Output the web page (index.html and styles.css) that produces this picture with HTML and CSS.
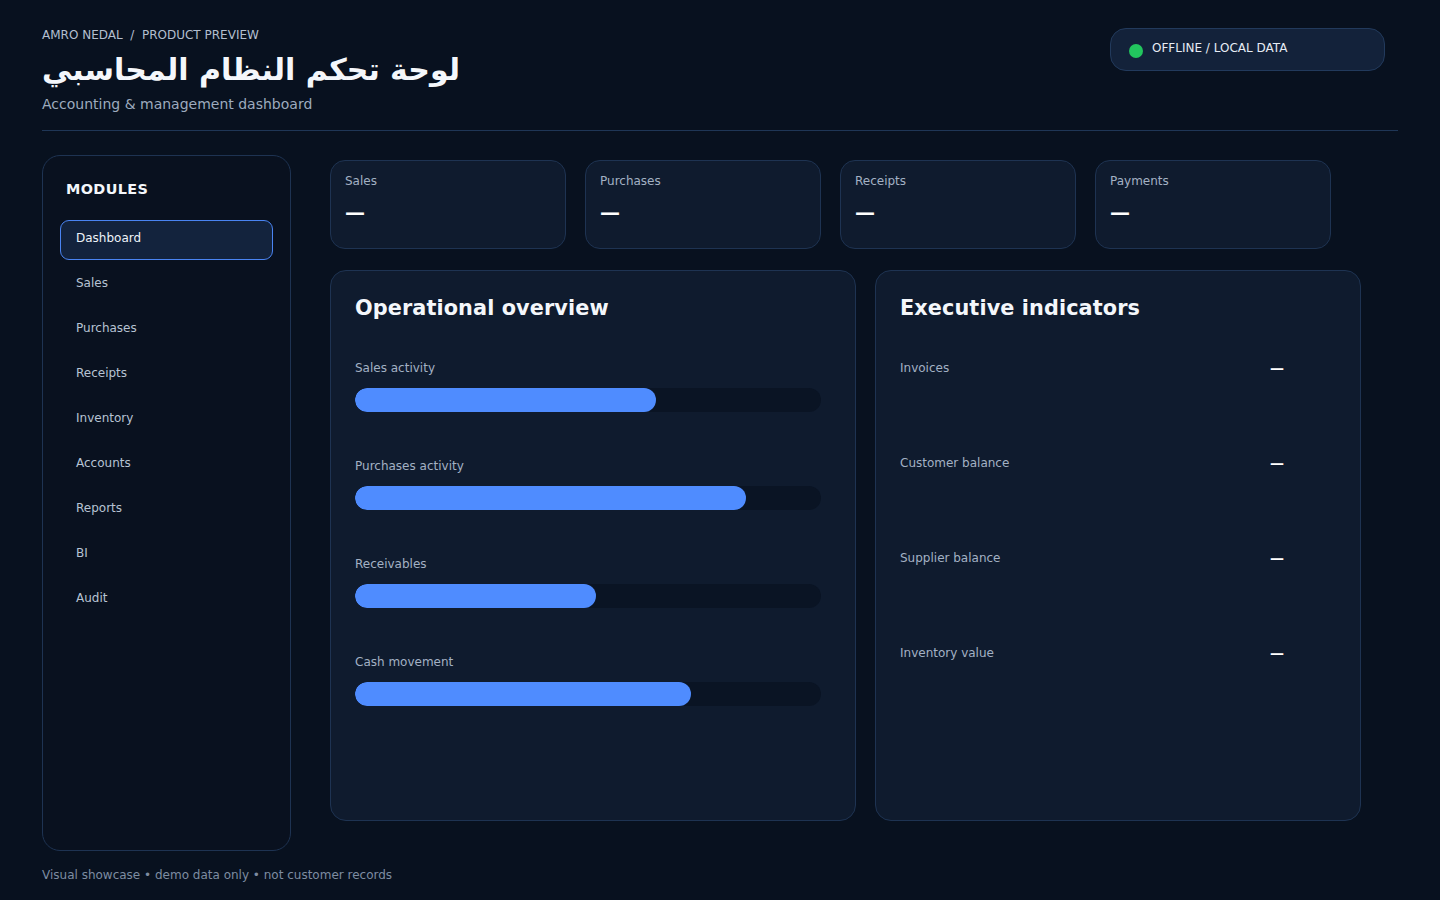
FILE: index.html
```html
<!DOCTYPE html>
<html lang="en">
<head>
<meta charset="utf-8">
<title>Accounting dashboard</title>
<link rel="stylesheet" href="styles.css">
</head>
<body>
<div class="page">
  <header class="header">
    <div class="head-text">
      <div class="crumb">AMRO NEDAL &nbsp;/&nbsp; PRODUCT PREVIEW</div>
      <h1 class="title" dir="rtl">لوحة تحكم النظام المحاسبي</h1>
      <div class="subtitle">Accounting &amp; management dashboard</div>
    </div>
    <div class="badge"><span class="dot"></span><span class="badge-text">OFFLINE / LOCAL DATA</span></div>
  </header>

  <div class="body">
    <aside class="sidebar">
      <div class="side-title">MODULES</div>
      <nav class="nav">
        <div class="nav-item active">Dashboard</div>
        <div class="nav-item">Sales</div>
        <div class="nav-item">Purchases</div>
        <div class="nav-item">Receipts</div>
        <div class="nav-item">Inventory</div>
        <div class="nav-item">Accounts</div>
        <div class="nav-item">Reports</div>
        <div class="nav-item">BI</div>
        <div class="nav-item">Audit</div>
      </nav>
    </aside>

    <main class="main">
      <div class="stats">
        <div class="stat"><div class="stat-label">Sales</div><div class="stat-value">—</div></div>
        <div class="stat"><div class="stat-label">Purchases</div><div class="stat-value">—</div></div>
        <div class="stat"><div class="stat-label">Receipts</div><div class="stat-value">—</div></div>
        <div class="stat"><div class="stat-label">Payments</div><div class="stat-value">—</div></div>
      </div>

      <div class="panels">
        <section class="panel panel-ops">
          <h2 class="panel-title">Operational overview</h2>
          <div class="bars">
            <div class="bar-group">
              <div class="bar-label">Sales activity</div>
              <div class="track"><div class="fill" style="width:64.6%"></div></div>
            </div>
            <div class="bar-group">
              <div class="bar-label">Purchases activity</div>
              <div class="track"><div class="fill" style="width:84%"></div></div>
            </div>
            <div class="bar-group">
              <div class="bar-label">Receivables</div>
              <div class="track"><div class="fill" style="width:51.8%"></div></div>
            </div>
            <div class="bar-group">
              <div class="bar-label">Cash movement</div>
              <div class="track"><div class="fill" style="width:72.2%"></div></div>
            </div>
          </div>
        </section>

        <section class="panel panel-exec">
          <h2 class="panel-title">Executive indicators</h2>
          <div class="kpis">
            <div class="kpi"><span class="kpi-label">Invoices</span><span class="kpi-value">—</span></div>
            <div class="kpi"><span class="kpi-label">Customer balance</span><span class="kpi-value">—</span></div>
            <div class="kpi"><span class="kpi-label">Supplier balance</span><span class="kpi-value">—</span></div>
            <div class="kpi"><span class="kpi-label">Inventory value</span><span class="kpi-value">—</span></div>
          </div>
        </section>
      </div>
    </main>
  </div>

  <footer class="footer">Visual showcase • demo data only • not customer records</footer>
</div>
</body>
</html>
```

FILE: styles.css
```css
* { box-sizing: border-box; }

html, body {
  margin: 0;
  padding: 0;
  background: #08111f;
  color: #f1f5f9;
  font-family: "DejaVu Sans", "Noto Sans", sans-serif;
}

.page {
  width: 1440px;
  height: 900px;
  padding: 27px 42px 0 42px;
  overflow: hidden;
}

/* Header */
.header {
  display: flex;
  justify-content: space-between;
  align-items: flex-start;
  padding-bottom: 17px;
  border-bottom: 1px solid #1f3656;
}

.crumb {
  font-size: 12px;
  line-height: 16px;
  color: #b3bfcf;
}

.title {
  margin: 9px 0 0 0;
  font-size: 30px;
  line-height: 36px;
  font-weight: 700;
  color: #f4f7fb;
  text-align: left;
}

.subtitle {
  margin-top: 7px;
  font-size: 14px;
  line-height: 18px;
  color: #9dabbe;
}

.badge {
  margin-top: 1px;
  margin-right: 13px;
  width: 275px;
  height: 43px;
  display: flex;
  align-items: center;
  gap: 9px;
  padding: 0 18px;
  background: #13223a;
  border: 1px solid #223a5c;
  border-radius: 16px;
}

.dot {
  width: 14px;
  height: 14px;
  border-radius: 50%;
  background: #22c55e;
  margin-top: 3px;
  flex: none;
}

.badge-text {
  font-size: 12px;
  line-height: 16px;
  color: #e6ecf4;
  margin-top: -4px;
}

/* Body */
.body {
  display: flex;
  gap: 39px;
  margin-top: 24px;
}

.sidebar {
  width: 249px;
  height: 696px;
  border: 1px solid #1e3352;
  border-radius: 18px;
  background: #09111f;
  padding: 24px 17px 17px 17px;
}

.side-title {
  margin-left: 6px;
  font-size: 14.4px;
  line-height: 18px;
  font-weight: 700;
  letter-spacing: 0.4px;
  color: #f4f7fb;
}

.nav {
  margin-top: 22px;
  display: flex;
  flex-direction: column;
  gap: 5px;
}

.nav-item {
  height: 40px;
  padding: 9px 0 0 15px;
  border: 1px solid transparent;
  border-radius: 9px;
  font-size: 12px;
  line-height: 16px;
  color: #b7c3d3;
}

.nav-item.active {
  background: #13233d;
  border-color: #4a84f2;
  color: #eef3f9;
}

/* Main */
.main {
  width: 1031px;
  margin-top: 5px;
  display: flex;
  flex-direction: column;
  gap: 21px;
}

.stats {
  display: flex;
  gap: 19px;
}

.stat {
  width: 236px;
  height: 89px;
  background: #0f1b2e;
  border: 1px solid #1e3352;
  border-radius: 15px;
  padding: 12px 14px;
}

.stat-label {
  font-size: 12px;
  line-height: 16px;
  color: #a3b1c4;
}

.stat-value {
  margin-top: 10px;
  font-size: 20px;
  line-height: 26px;
  font-weight: 700;
  color: #ffffff;
}

.panels {
  display: flex;
  gap: 19px;
}

.panel {
  height: 551px;
  background: #0f1b2e;
  border: 1px solid #1e3352;
  border-radius: 16px;
  padding: 24px 24px;
}

.panel-ops { width: 526px; }
.panel-exec { width: 486px; }

.panel-title {
  margin: 0;
  font-size: 20.8px;
  line-height: 26px;
  font-weight: 700;
  color: #f4f7fb;
  letter-spacing: 0.1px;
}

.bars {
  margin-top: 39px;
  display: flex;
  flex-direction: column;
  gap: 46px;
}

.bar-label {
  font-size: 12px;
  line-height: 16px;
  color: #a3b1c4;
}

.track {
  margin-top: 12px;
  width: 466px;
  height: 24px;
  border-radius: 12px;
  background: #0a1424;
  overflow: hidden;
}

.fill {
  height: 100%;
  border-radius: 12px;
  background: #4f8cff;
}

.kpis {
  margin-top: 39px;
  display: flex;
  flex-direction: column;
  gap: 79px;
  padding-right: 52px;
}

.kpi {
  display: flex;
  justify-content: space-between;
  align-items: center;
  height: 16px;
}

.kpi-label {
  font-size: 12px;
  line-height: 16px;
  color: #a3b1c4;
}

.kpi-value {
  font-size: 14px;
  line-height: 16px;
  font-weight: 700;
  color: #ffffff;
}

.footer {
  margin-top: 16px;
  font-size: 12px;
  line-height: 16px;
  color: #7d8ca1;
}
```
